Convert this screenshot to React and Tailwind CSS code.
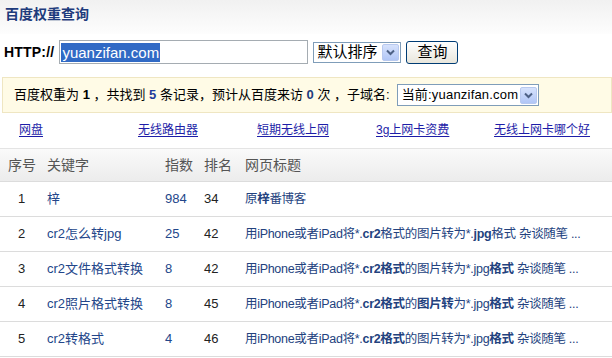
import React from 'react'

const Arrow = ({ className = '' }) => (
  <div className={`flex items-center justify-center w-[17px] h-[17px] rounded-[2px] border border-[#b8c9ef] bg-linear-to-b from-[#d6e2fc] to-[#b1c6f6] ${className}`}>
    <svg width="9" height="7" viewBox="0 0 9 7">
      <path d="M1 1.5 L4.5 5 L8 1.5" fill="none" stroke="#4d6185" strokeWidth="2" />
    </svg>
  </div>
)

const links = ['网盘', '无线路由器', '短期无线上网', '3g上网卡资费', '无线上网卡哪个好']

const rows = [
  { n: 1, kw: '梓', idx: '984', rank: '34', title: 'blog' },
  { n: 2, kw: 'cr2怎么转jpg', idx: '25', rank: '42', title: 'a' },
  { n: 3, kw: 'cr2文件格式转换', idx: '8', rank: '42', title: 'b' },
  { n: 4, kw: 'cr2照片格式转换', idx: '8', rank: '45', title: 'c' },
  { n: 5, kw: 'cr2转格式', idx: '4', rank: '46', title: 'b' },
]

const Title = ({ type }) => {
  if (type === 'blog') {
    return <span>原<b>梓</b>番博客</span>
  }
  if (type === 'a') {
    return (
      <span>用iPhone或者iPad将*.<b>cr2</b>格式的图片转为*.<b>jpg</b>格式 杂谈随笔 ...</span>
    )
  }
  if (type === 'c') {
    return (
      <span>用iPhone或者iPad将*.<b>cr2格式</b>的<b>图片转</b>为*.jpg<b>格式</b> 杂谈随笔 ...</span>
    )
  }
  return (
    <span>用iPhone或者iPad将*.<b>cr2格式</b>的图片转为*.jpg<b>格式</b> 杂谈随笔 ...</span>
  )
}

export default function App() {
  return (
    <div className="w-[612px] h-[358px] overflow-hidden bg-white text-[#333] font-['Liberation_Sans','Noto_Sans_CJK_SC',sans-serif]">
      {/* header */}
      <div className="h-[34px] pt-[5px] pl-[5px] bg-linear-to-b from-[#f1f1f1] to-[#fdfdfd]">
        <h1 className="text-[14px] leading-[18px] font-bold text-[#1e3b7c]">百度权重查询</h1>
      </div>

      {/* search form */}
      <div className="flex items-center h-[24px] mt-[6px] pl-[4px]">
        <span className="text-[14px] font-bold text-black tracking-[0.2px]">HTTP://</span>
        <div className="ml-[5px] w-[249px] h-[24px] border border-[#a5acb2] bg-white flex items-center pl-[1px]">
          <span className="bg-[#316ac5] text-white text-[15px] leading-[19px] px-[1px]">yuanzifan.com</span>
        </div>
        <div className="ml-[5px] w-[88px] h-[21px] border border-[#7f9db9] bg-white flex items-center justify-between pl-[3px] pr-[1px]">
          <span className="text-[15px] leading-[18px] text-black">默认排序</span>
          <Arrow />
        </div>
        <button className="ml-[5px] w-[52px] h-[23px] rounded-[3px] border border-[#003c74] bg-linear-to-b from-white to-[#e8e6dc] text-[15px] leading-[18px] text-black">
          查询
        </button>
      </div>

      {/* summary bar */}
      <div className="mt-[13px] ml-[2px] h-[36px] border border-[#efe6c2] bg-[#fffbe6] flex items-center pl-[11px] text-[13px] text-black whitespace-nowrap">
        <span className="shrink-0">百度权重为 <b>1</b> ，共找到 <b className="text-[#1e3b9c]">5</b> 条记录，预计从百度来访 <b className="text-[#1e3b7c]">0</b> 次 ，子域名:</span>
        <div className="ml-[7px] shrink-0 w-[142px] h-[22px] border border-[#7f9db9] bg-white flex items-center justify-between pl-[4px] pr-[1px]">
          <span className="text-[13px] leading-[18px] tracking-[0.2px]">当前:yuanzifan.com</span>
          <Arrow />
        </div>
      </div>

      {/* related links */}
      <div className="grid grid-cols-[119px_119px_119px_118px_1fr] pl-[19px] h-[33px] items-center text-[12px]">
        {links.map((l) => (
          <a key={l} href="#" className="text-[#1d1da8] underline underline-offset-2 w-fit">{l}</a>
        ))}
      </div>

      {/* results */}
      <div className="mt-[2px] border-t border-[#e4e4e4]">
        <div className="grid grid-cols-[47px_118px_39px_41px_1fr] h-[33px] items-center bg-linear-to-b from-[#fafafa] to-[#ececec] border-b border-[#dcdcdc] text-[14px] text-[#555]">
          <span className="pl-[8px]">序号</span>
          <span>关键字</span>
          <span>指数</span>
          <span>排名</span>
          <span>网页标题</span>
        </div>
        {rows.map((r) => (
          <div key={r.n} className="grid grid-cols-[47px_118px_39px_41px_1fr] h-[35px] items-center border-b border-[#dcdcdc] text-[13px]">
            <span className="pl-[18px] text-[#222]">{r.n}</span>
            <span className="text-[#23468a]">{r.kw}</span>
            <span className="text-[#23468a]">{r.idx}</span>
            <span className="text-[#222]">{r.rank}</span>
            <span className="text-[#23427e] text-[12.5px] whitespace-nowrap overflow-hidden tracking-[-0.3px]">
              <Title type={r.title} />
            </span>
          </div>
        ))}
      </div>
    </div>
  )
}
